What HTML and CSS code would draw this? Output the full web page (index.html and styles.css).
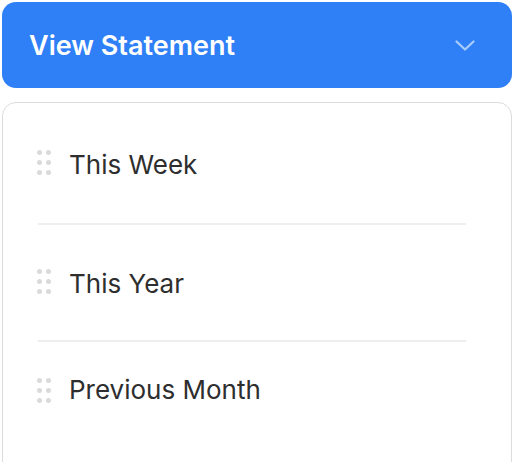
FILE: index.html
```html
<!DOCTYPE html>
<html lang="en">
<head>
  <meta charset="UTF-8" />
  <meta name="viewport" content="width=device-width, initial-scale=1.0"/>
  <title>View Statement</title>
  <link rel="stylesheet" href="styles.css">
</head>
<body>
  <div class="toggle">
    <span>View Statement</span>
    <svg class="chevron" width="20" height="11" viewBox="0 0 20 11">
      <path d="M1.5 1.5 L10 9.5 L18.5 1.5" fill="none" stroke="#a9ccff" stroke-width="2.2" stroke-linecap="round" stroke-linejoin="round"/>
    </svg>
  </div>

  <div class="panel">
    <div class="item first">
      <div class="grip"><i></i><i></i><i></i><i></i><i></i><i></i></div>
      <span>This Week</span>
    </div>
    <div class="divider"></div>
    <div class="item">
      <div class="grip"><i></i><i></i><i></i><i></i><i></i><i></i></div>
      <span>This Year</span>
    </div>
    <div class="divider"></div>
    <div class="item last">
      <div class="grip"><i></i><i></i><i></i><i></i><i></i><i></i></div>
      <span>Previous Month</span>
    </div>
  </div>
</body>
</html>
```

FILE: styles.css
```css
body {
  font-family: 'Inter', 'Noto Sans', sans-serif;
  margin: 0;
  padding: 2px;
  background: white;
  color: #2e2e2e;
}
.toggle {
  display: flex;
  align-items: center;
  justify-content: space-between;
  height: 86px;
  padding: 0 37px 0 27px;
  background-color: #2f80f7;
  border-radius: 14px;
  color: white;
  font-size: 27px;
  font-weight: 600;
}
.chevron {
  display: block;
}
.panel {
  margin-top: 14px;
  border: 1px solid #dcdcdc;
  border-radius: 14px;
  padding-bottom: 40px;
}
.item {
  display: flex;
  align-items: center;
  padding: 43px 0 40px 34px;
  font-size: 26px;
  line-height: 32px;
}
.item.first {
  padding-top: 46px;
  padding-bottom: 42px;
}
.item.last {
  padding-top: 32px;
}
.grip {
  display: grid;
  grid-template-columns: 5px 5px;
  column-gap: 4px;
  row-gap: 5px;
  margin: -6px 18px 0 0;
}
.item.last .grip {
  margin-top: 0;
}
.grip i {
  width: 5px;
  height: 5px;
  border-radius: 50%;
  background: #dadada;
}
.divider {
  height: 2px;
  margin: 0 45px 0 35px;
  background: #eeeeee;
}
```
